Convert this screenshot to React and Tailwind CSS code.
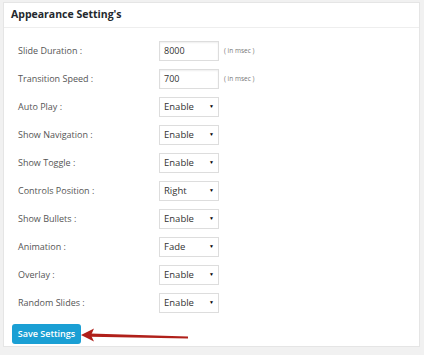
import React from "react";

const rows = [
  { label: "Slide Duration :", type: "input", value: "8000", note: "( in msec )" },
  { label: "Transition Speed :", type: "input", value: "700", note: "( in msec )" },
  { label: "Auto Play :", value: "Enable" },
  { label: "Show Navigation :", value: "Enable" },
  { label: "Show Toggle :", value: "Enable" },
  { label: "Controls Position :", value: "Right" },
  { label: "Show Bullets :", value: "Enable" },
  { label: "Animation :", value: "Fade" },
  { label: "Overlay :", value: "Enable" },
  { label: "Random Slides :", value: "Enable" },
];

function Field({ row }) {
  if (row.type === "input") {
    return (
      <div className="flex items-center">
        <div className="w-[60px] h-[20px] border border-[#dddddd] shadow-[inset_0_1px_2px_rgba(0,0,0,0.07)] bg-white pl-[4px] flex items-center text-[9px] text-[#333]">
          {row.value}
        </div>
        <span className="ml-[5px] text-[6.5px] text-[#777]">{row.note}</span>
      </div>
    );
  }
  return (
    <div className="w-[60px] h-[20px] border border-[#dddddd] bg-white pl-[4px] pr-[4px] flex items-center justify-between text-[9.5px] text-[#333]">
      <span>{row.value}</span>
      <span className="text-[5px] text-black">▼</span>
    </div>
  );
}

export default function App() {
  return (
    <div className="w-[424px] h-[355px] bg-[#f1f1f1] pt-[2px] pl-[3px] font-['Open_Sans',sans-serif]">
      <div className="w-[417px] h-[345px] bg-white border border-[#e5e5e5] relative">
        <div className="h-[25px] border-b border-[#eeeeee] pl-[7px] flex items-center text-[10.5px] font-bold text-[#23282d]">
          Appearance Setting's
        </div>
        <div className="pt-[9px] pl-[14px]">
          {rows.map((row) => (
            <div key={row.label} className="h-[28px] flex items-center">
              <div className="w-[141px] text-[9px] text-[#555]">{row.label}</div>
              <Field row={row} />
            </div>
          ))}
        </div>
        <div className="pl-[8px] mt-[7px]">
          <button className="h-[20px] w-[69px] rounded-[3px] bg-[#1a9fd4] text-white text-[9px] font-semibold flex items-center justify-center">
            Save Settings
          </button>
        </div>
        <svg className="absolute left-[74px] top-[320px]" width="114" height="22" viewBox="0 0 114 22">
          <path d="M12 10.5 L110 13.5 L110 15.5 L12 13.8 Z" fill="#b0201a" />
          <path d="M3 12 L16 5.5 L13 12.2 L16 18.5 Z" fill="#b0201a" />
        </svg>
      </div>
    </div>
  );
}
